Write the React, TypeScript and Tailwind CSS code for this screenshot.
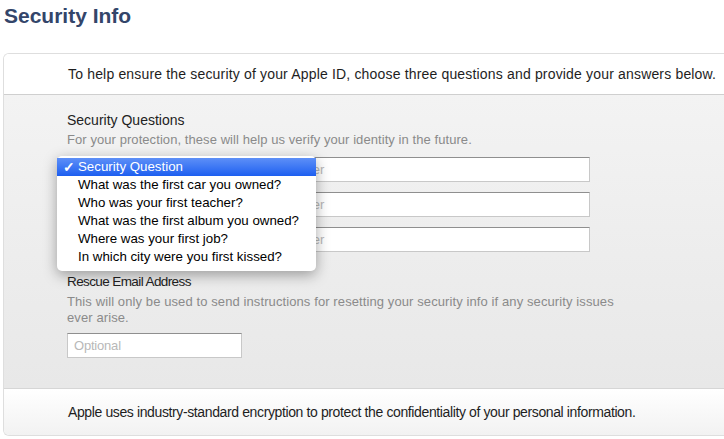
import React from 'react';

const questions = [
  'What was the first car you owned?',
  'Who was your first teacher?',
  'What was the first album you owned?',
  'Where was your first job?',
  'In which city were you first kissed?',
];

function TextInput({ placeholder, className }: { placeholder: string; className: string }) {
  return (
    <div
      className={`h-[25px] bg-white border border-[#c8c8c8] border-t-[#8f8f8f] flex items-center text-[13px] text-[#b8b8b8] ${className}`}
    >
      {placeholder}
    </div>
  );
}

export default function App() {
  return (
    <div className="w-[724px] h-[439px] overflow-hidden bg-white font-['Liberation_Sans',Arial,sans-serif] text-[#222]">
      <h1 className="pl-[4px] pt-[4px] h-[53px] text-[21px] leading-[24px] font-bold text-[#33456a]">
        Security Info
      </h1>

      <div className="ml-[3px] border border-r-0 border-[#dedede] rounded-l-[6px] overflow-hidden">
        <div className="h-[41px] bg-white border-b border-[#cfcfcf] flex items-center pl-[64px] text-[14px] tracking-[0.17px] text-[#1e1e1e]">
          To help ensure the security of your Apple ID, choose three questions and provide your answers below.
        </div>

        <div className="relative bg-gradient-to-b from-[#f3f3f3] to-[#e8e8e8] pl-[63px] pt-[16px] pb-[30px]">
          <div className="text-[14px] leading-[18px]">Security Questions</div>
          <div className="mt-[3px] text-[13px] leading-[16px] tracking-[0.07px] text-[#8a8a8a]">
            For your protection, these will help us verify your identity in the future.
          </div>

          <div className="mt-[9px] flex flex-col gap-[10px]">
            {[0, 1, 2].map((i) => (
              <div key={i} className="flex items-center">
                <div className="w-[176px] h-[23px] rounded-[4px] bg-white border border-[#b9b9b9] ring-2 ring-[#8fb3ee]" />
                <TextInput placeholder="Answer" className="ml-[27px] w-[320px] pl-[10px]" />
              </div>
            ))}
          </div>

          <div className="mt-[21px] text-[13.5px] leading-[18px] tracking-[-0.6px]">Rescue Email Address</div>
          <div className="mt-[3px] w-[560px] text-[13px] leading-[16px] tracking-[0.1px] text-[#8a8a8a]">
            This will only be used to send instructions for resetting your security info if any security issues
            ever arise.
          </div>
          <TextInput placeholder="Optional" className="mt-[7px] w-[175px] pl-[6px] tracking-[-0.2px]" />

          <div className="absolute left-[53px] top-[61px] w-[259px] rounded-[5px] bg-white pt-[2px] pb-[5px] shadow-[0_4px_14px_rgba(0,0,0,0.35)] text-[13.3px] text-black">
            <div className="h-[18px] flex items-center bg-gradient-to-b from-[#5d8ff7] to-[#1c5ef0] text-white">
              <span className="w-[21px] pl-[6px] text-[14px] font-bold">✓</span>
              <span>Security Question</span>
            </div>
            {questions.map((q) => (
              <div key={q} className="h-[18px] flex items-center pl-[21px]">
                {q}
              </div>
            ))}
          </div>
        </div>

        <div className="h-[47px] border-t border-[#d6d6d6] bg-gradient-to-b from-white to-[#f2f2f2] flex items-center pl-[64px] text-[14px] tracking-[-0.38px] text-[#1e1e1e]">
          Apple uses industry-standard encryption to protect the confidentiality of your personal information.
        </div>
      </div>
    </div>
  );
}
